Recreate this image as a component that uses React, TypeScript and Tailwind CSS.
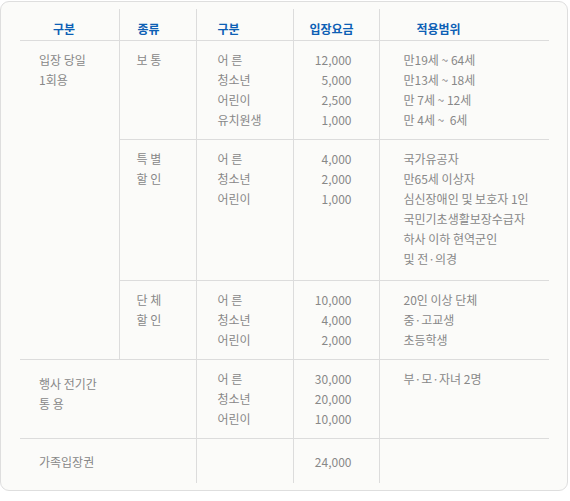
import React from 'react';

type Row = {
  kind?: string;
  group: string[];
  fees: string[];
  scope: string[];
  h: string;
};

const font = { fontFamily: '"Noto Sans CJK KR", "Noto Sans", sans-serif' };

const ticketRows: Row[] = [
  {
    kind: '보 통',
    group: ['어 른', '청소년', '어린이', '유치원생'],
    fees: ['12,000', '5,000', '2,500', '1,000'],
    scope: ['만19세 ~ 64세', '만13세 ~ 18세', '만 7세 ~ 12세', '만 4세 ~  6세'],
    h: 'h-[99px]',
  },
  {
    kind: '특 별\n할 인',
    group: ['어 른', '청소년', '어린이'],
    fees: ['4,000', '2,000', '1,000'],
    scope: ['국가유공자', '만65세 이상자', '심신장애인 및 보호자 1인', '국민기초생활보장수급자', '하사 이하 현역군인', '및 전·의경'],
    h: 'h-[141px]',
  },
  {
    kind: '단 체\n할 인',
    group: ['어 른', '청소년', '어린이'],
    fees: ['10,000', '4,000', '2,000'],
    scope: ['20인 이상 단체', '중·고교생', '초등학생'],
    h: 'h-[79px]',
  },
];

const Lines = ({ items }: { items: string[] }) => (
  <>
    {items.map((t, i) => (
      <div key={i} className="whitespace-pre">{t}</div>
    ))}
  </>
);

const cell = 'align-top pt-[9px] border-b border-[#dcdcdc]';

export default function App() {
  return (
    <div className="w-[570px] h-[501px] bg-white" style={font}>
      <div className="w-[568px] h-[490px] mt-px bg-[#fbfbf9] border border-[#dedede] rounded-[9px] pl-[19px] pt-[7px]">
        <table className="table-fixed border-collapse w-[529px] text-[12px] leading-[20px] text-[#888888]">
          <colgroup>
            <col className="w-[99px]" />
            <col className="w-[77px]" />
            <col className="w-[97px]" />
            <col className="w-[86px]" />
            <col className="w-[170px]" />
          </colgroup>
          <thead>
            <tr className="h-[31px] text-[#0d5fb5] font-bold">
              <th className="align-top pt-[10px] pl-[33px] text-left font-bold border-b border-[#dcdcdc]">구분</th>
              <th className="align-top pt-[10px] pl-[18px] text-left font-bold border-b border-l border-[#dcdcdc]">종류</th>
              <th className="align-top pt-[10px] pl-[21px] text-left font-bold border-b border-l border-[#dcdcdc]">구분</th>
              <th className="align-top pt-[10px] pl-[16px] text-left font-bold border-b border-l border-[#dcdcdc]">입장요금</th>
              <th className="align-top pt-[10px] pl-[37px] text-left font-bold border-b border-l border-[#dcdcdc]">적용범위</th>
            </tr>
          </thead>
          <tbody>
            {ticketRows.map((r, i) => (
              <tr key={i} className={r.h}>
                {i === 0 && (
                  <td rowSpan={3} className={`${cell} pl-[19px]`}>
                    <div>입장 당일</div>
                    <div>1회용</div>
                  </td>
                )}
                <td className={`${cell} border-l pl-[17px] whitespace-pre`}>{r.kind}</td>
                <td className={`${cell} border-l pl-[21px]`}>
                  <Lines items={r.group} />
                </td>
                <td className={`${cell} border-l pr-[27px] text-right`}>
                  <Lines items={r.fees} />
                </td>
                <td className={`${cell} border-l pl-[24px]`}>
                  <Lines items={r.scope} />
                </td>
              </tr>
            ))}
            <tr className="h-[79px]">
              <td colSpan={2} className="align-top pt-[14px] pl-[19px] border-b border-[#dcdcdc]">
                <div>행사 전기간</div>
                <div>통 용</div>
              </td>
              <td className={`${cell} border-l pl-[21px]`}>
                <Lines items={['어 른', '청소년', '어린이']} />
              </td>
              <td className={`${cell} border-l pr-[27px] text-right`}>
                <Lines items={['30,000', '20,000', '10,000']} />
              </td>
              <td className={`${cell} border-l pl-[24px]`}>
                <Lines items={['부·모·자녀 2명']} />
              </td>
            </tr>
            <tr className="h-[45px]">
              <td colSpan={2} className="align-top pt-[13px] pl-[19px]">가족입장권</td>
              <td className="align-top border-l border-[#dcdcdc]"></td>
              <td className="align-top pt-[13px] pr-[27px] text-right border-l border-[#dcdcdc]">24,000</td>
              <td className="align-top border-l border-[#dcdcdc]"></td>
            </tr>
          </tbody>
        </table>
      </div>
    </div>
  );
}
